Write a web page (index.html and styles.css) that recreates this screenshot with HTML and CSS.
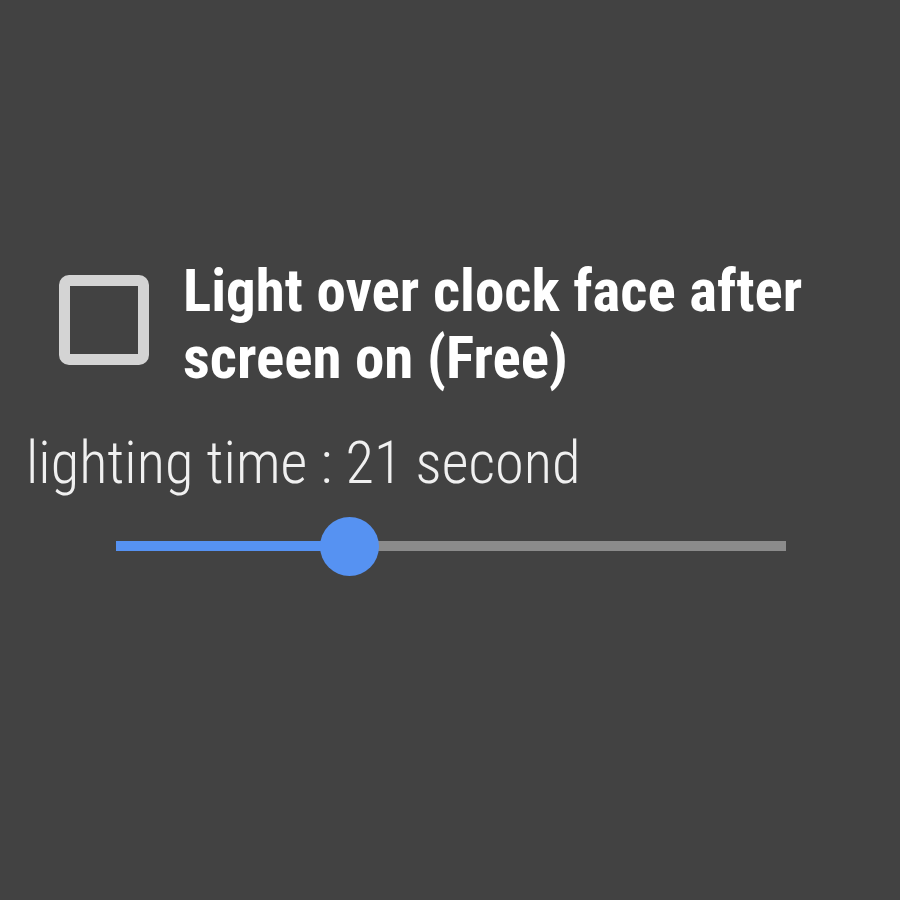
FILE: index.html
```html
<!DOCTYPE html>
<html>
<head>
<meta charset="UTF-8">
<title>lighting setting</title>
<link rel="stylesheet" href="styles.css">
</head>
<body>
<section class="screen">
    <div class="option">
        <span class="checkbox"></span>
        <div class="option-title">Light over clock face after screen on (Free)</div>
    </div>
    <div class="label">lighting time : 21 second</div>
    <div class="slider">
        <div class="track"></div>
        <div class="fill" style="width: 34.8%"></div>
        <div class="thumb" style="left: 34.8%"></div>
    </div>
</section>
</body>
</html>
```
FILE: styles.css
```css
body{
    margin: 0;
    padding: 0;
    background: #424242;
    font-family: "Roboto Condensed", Roboto, sans-serif;
    font-stretch: condensed;
}
.screen{
    width: 900px;
    height: 900px;
    padding-top: 257px;
    box-sizing: border-box;
}
.option{
    display: flex;
    align-items: flex-start;
    padding-left: 59px;
}
.checkbox{
    flex: none;
    width: 90px;
    height: 90px;
    margin-top: 18px;
    margin-right: 34px;
    box-sizing: border-box;
    border: 11px solid #d4d4d4;
    border-radius: 10px;
}
.option-title{
    width: 660px;
    color: #ffffff;
    font-weight: 700;
    font-size: 59px;
    line-height: 67px;
}
.label{
    margin-top: 39px;
    padding-left: 26px;
    color: #f0f0f0;
    font-weight: 300;
    font-size: 58.5px;
    line-height: 67px;
    white-space: nowrap;
}
.slider{
    position: relative;
    width: 670px;
    height: 60px;
    margin: 19px 0 0 116px;
}
.track, .fill{
    position: absolute;
    left: 0;
    top: 25px;
    height: 10px;
}
.track{
    width: 100%;
    background: #8b8b8b;
}
.fill{
    background: #5692f2;
}
.thumb{
    position: absolute;
    top: 1px;
    width: 59px;
    height: 59px;
    margin-left: -29px;
    border-radius: 50%;
    background: #5692f2;
}
```
